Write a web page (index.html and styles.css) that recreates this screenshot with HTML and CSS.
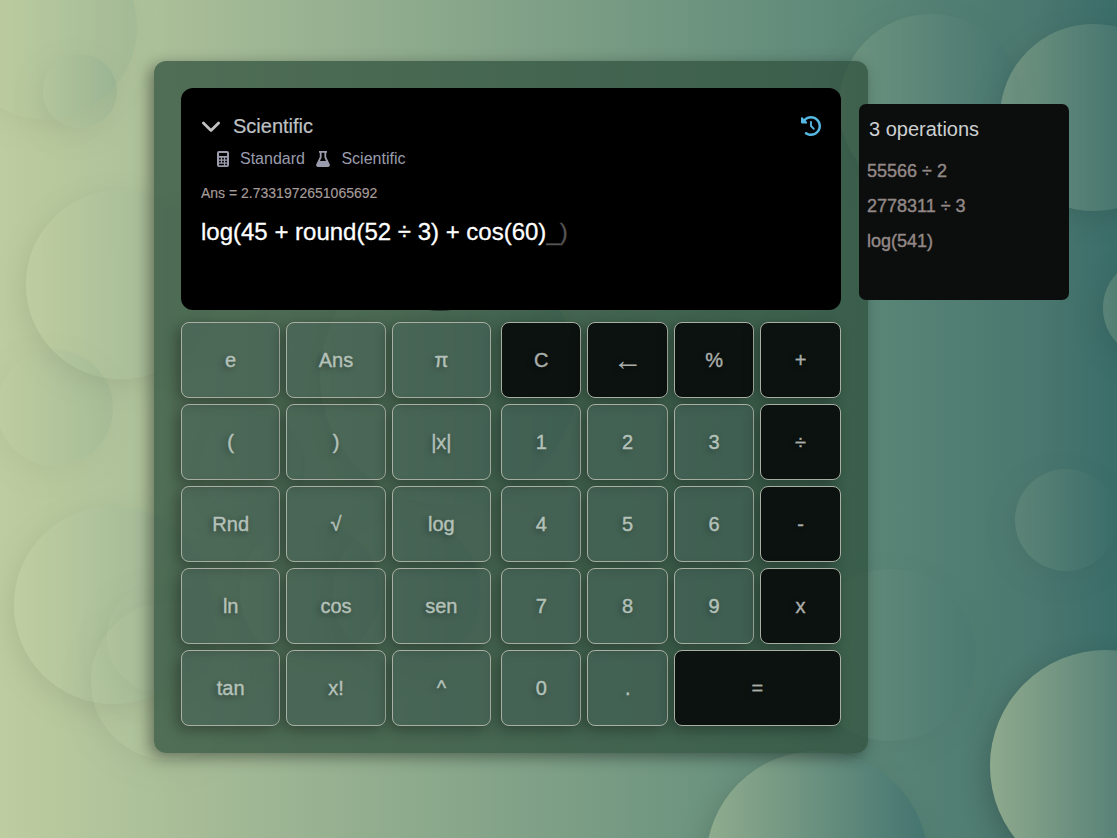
FILE: index.html
```html
<!DOCTYPE html>
<html lang="en">
<head>
<meta charset="utf-8">
<title>Calculator</title>
<link rel="stylesheet" href="styles.css">
</head>
<body>
<div class="bubbles" aria-hidden="true">
  <i class="bubble b1"></i><i class="bubble b2"></i><i class="bubble b3"></i><i class="bubble b4"></i>
  <i class="bubble b5"></i><i class="bubble b6"></i><i class="bubble b7"></i><i class="bubble b8"></i>
  <i class="bubble b9"></i><i class="bubble b10"></i><i class="bubble b11"></i><i class="bubble b12"></i>
  <i class="bubble b13"></i><i class="bubble b14"></i><i class="bubble b15"></i><i class="bubble b16"></i>
  <i class="bubble b17"></i><i class="bubble b18"></i>
</div>
<main class="calculator">
  <section class="display">
    <header class="display-head">
      <svg class="chevron" viewBox="0 0 20 20"><path d="M2.400 7 10 14.500l7.600-7.500" fill="none" stroke="currentColor" stroke-width="2.800" stroke-linecap="round" stroke-linejoin="round"/></svg>
      <span class="mode-name">Scientific</span>
      <svg class="history-icon" viewBox="0 0 512 512"><path fill="currentColor" d="M75 75 41 41C26 26 0 36.700 0 57.900V168c0 13.300 10.700 24 24 24h110.100c21.400 0 32.100-25.900 17-41l-30.800-30.800C155 85.500 203 64 256 64c106 0 192 86 192 192s-86 192-192 192c-40.800 0-78.600-12.700-109.700-34.400-14.500-10.100-34.400-6.600-44.600 7.900s-6.600 34.400 7.900 44.600C151.200 495 201.700 512 256 512c141.400 0 256-114.600 256-256S397.400 0 256 0C185.300 0 121.300 28.700 75 75zm181 53c-13.300 0-24 10.700-24 24v104c0 6.400 2.500 12.500 7 17l72 72c9.400 9.400 24.600 9.400 33.900 0s9.400-24.600 0-33.900l-65-65V152c0-13.300-10.700-24-24-24z"/></svg>
    </header>
    <nav class="modes">
      <svg class="mode-icon" viewBox="0 0 14 16"><path fill="currentColor" fill-rule="evenodd" d="M3 0h8a2 2 0 0 1 2 2v12a2 2 0 0 1-2 2H3a2 2 0 0 1-2-2V2a2 2 0 0 1 2-2zm0 2v3h8V2zM3 6.700v1.800h1.800V6.700zm3.100 0v1.800h1.800V6.700zm3.100 0v1.800H11V6.700zM3 9.800v1.600h1.800V9.800zm3.100 0v1.600h1.800V9.800zm3.100 0v1.600H11V9.800zM3 12.700v1.600h4.900v-1.600zm6.200 0v1.600H11v-1.600z"/></svg>
      <span class="mode">Standard</span>
      <svg class="mode-icon flask" viewBox="0 0 14 16"><path fill="currentColor" fill-rule="evenodd" d="M3 0h8v1.800h-.8V6l3.400 7a2 2 0 0 1-1.800 3H2.200a2 2 0 0 1-1.800-3l3.400-7V1.800H3zm2.600 1.800v4.600L4 10h6L8.400 6.400V1.800z"/></svg>
      <span class="mode">Scientific</span>
    </nav>
    <p class="answer">Ans = 2.7331972651065692</p>
    <p class="expression">log(45 + round(52 ÷ 3) + cos(60)<span class="pending">_)</span></p>
  </section>
  <div class="keypad">
    <div class="keys functions">
      <button class="key">e</button><button class="key">Ans</button><button class="key">π</button>
      <button class="key">(</button><button class="key">)</button><button class="key">|x|</button>
      <button class="key">Rnd</button><button class="key">√</button><button class="key">log</button>
      <button class="key">ln</button><button class="key">cos</button><button class="key">sen</button>
      <button class="key">tan</button><button class="key">x!</button><button class="key">^</button>
    </div>
    <div class="keys numbers">
      <button class="key dark">C</button><button class="key dark arrow">←</button><button class="key dark">%</button><button class="key dark">+</button>
      <button class="key">1</button><button class="key">2</button><button class="key">3</button><button class="key dark">÷</button>
      <button class="key">4</button><button class="key">5</button><button class="key">6</button><button class="key dark">-</button>
      <button class="key">7</button><button class="key">8</button><button class="key">9</button><button class="key dark">x</button>
      <button class="key">0</button><button class="key">.</button><button class="key dark equals">=</button>
    </div>
  </div>
  <aside class="history">
    <h2 class="history-title">3 operations</h2>
    <ul class="history-list">
      <li>55566 ÷ 2</li>
      <li>2778311 ÷ 3</li>
      <li>log(541)</li>
    </ul>
  </aside>
</main>
</body>
</html>
```
FILE: styles.css
```css
* { box-sizing: border-box; margin: 0; padding: 0; }

body {
  position: relative;
  height: 838px;
  padding: 61px 0 0 154px;
  overflow: hidden;
  font-family: "Liberation Sans", Arial, sans-serif;
  background: linear-gradient(90deg, #becda0 0%, #9ab392 27%, #749982 57%, #5a8677 78%, #4a776f 93%, #3b6d69 100%);
}

.bubbles { position: absolute; inset: 0; overflow: hidden; }
.bubble {
  position: absolute;
  width: calc(var(--r) * 2);
  height: calc(var(--r) * 2);
  left: calc(var(--x) - var(--r));
  top: calc(var(--y) - var(--r));
  border-radius: 50%;
  opacity: var(--o);
  background: linear-gradient(90deg, #c5d2a5, #2c626a);
  box-shadow: -5px 8px 24px rgba(0, 0, 0, .3);
}
.b1 { --x: 45px; --y: 27px; --r: 92px; --o: .13; background: linear-gradient(90deg, #c5d2a5, #5f8f80); }
.b2 { --x: 80px; --y: 91px; --r: 37px; --o: .14; background: linear-gradient(90deg, #b4c79c, #57857c); }
.b3 { --x: 120px; --y: 284px; --r: 94.500px; --o: .23; background: linear-gradient(90deg, #ccd8aa, #7c9c88); }
.b4 { --x: 55px; --y: 408px; --r: 58px; --o: .11; background: linear-gradient(90deg, #c5d2a5, #578478); }
.b5 { --x: 113px; --y: 605px; --r: 99px; --o: .23; background: linear-gradient(90deg, #ccd8aa, #6f9688); }
.b6 { --x: 162px; --y: 638px; --r: 55px; --o: .09; background: linear-gradient(90deg, #becda0, #648c80); }
.b7 { --x: 170px; --y: 681px; --r: 79px; --o: .12; background: linear-gradient(90deg, #c5d2a5, #9ab69a); }
.b8 { --x: 449px; --y: 376px; --r: 129px; --o: .25; }
.b9 { --x: 407px; --y: 592px; --r: 74px; --o: .18; }
.b10 { --x: 253px; --y: 465px; --r: 53px; --o: .1; }
.b11 { --x: 310px; --y: 592px; --r: 70px; --o: .15; }
.b12 { --x: 931px; --y: 106px; --r: 92px; --o: .17; }
.b13 { --x: 1093px; --y: 117px; --r: 93.500px; --o: .3; }
.b14 { --x: 1153px; --y: 308px; --r: 50px; --o: .2; }
.b15 { --x: 1066px; --y: 520px; --r: 51px; --o: .12; background: linear-gradient(90deg, #c5d2a5, #356a6a); }
.b16 { --x: 890px; --y: 655px; --r: 86px; --o: .11; }
.b17 { --x: 1106px; --y: 766px; --r: 116px; --o: .54; }
.b18 { --x: 817px; --y: 862px; --r: 111px; --o: .4; }

.calculator {
  position: relative;
  z-index: 0;
  width: 714px;
  height: 692px;
  padding: 27px;
  border-radius: 12px;
  background: rgba(46, 79, 61, .73);
  box-shadow: -4px 4px 15px rgba(0, 0, 0, .4);
}

.display {
  position: relative;
  height: 222px;
  padding: 28px 20px 0;
  border-radius: 12px;
  background: #000;
}
/* Lower edge of the round glow that sits behind the display */
.display::after {
  content: "";
  position: absolute;
  z-index: -1;
  left: 194px;
  bottom: -1px;
  width: 130px;
  height: 130px;
  border-radius: 50%;
  background: rgba(25, 35, 28, .7);
}

.display-head { display: flex; align-items: center; height: 20px; }
.chevron { width: 20px; height: 20px; color: #bfc0c2; }
.mode-name { margin-left: 12px; font-size: 20px; line-height: 20px; color: #bfc1c4; -webkit-text-stroke: .2px currentColor; }
.history-icon { width: 20px; height: 20px; margin-left: auto; color: #55b9e3; }

.modes {
  display: flex;
  align-items: center;
  height: 20px;
  margin-top: 13px;
  padding-left: 15px;
  color: #9a9cad;
}
.mode-icon { width: 14px; height: 16px; margin-right: 10px; }
.flask { margin-right: 11.500px; }
.mode { margin-right: 11px; font-size: 16px; line-height: 20px; }

.answer { margin-top: 16px; font-size: 14px; line-height: 16px; color: #a79c9a; -webkit-text-stroke: .15px currentColor; }
.expression {
  margin-top: 17px;
  font-size: 24px;
  line-height: 28px;
  color: #fff;
  -webkit-text-stroke: .3px currentColor;
}
.pending { color: #565353; }

.keypad { display: grid; grid-template-columns: 310px 339.800px; column-gap: 10px; margin-top: 12px; }
.keys { display: grid; grid-auto-rows: 76px; gap: 6px; }
.functions { grid-template-columns: repeat(3, 1fr); }
.numbers { grid-template-columns: repeat(4, 1fr); }

.key {
  border: 1px solid #a9b0a3;
  border-radius: 8px;
  font: 20px "Liberation Sans", Arial, sans-serif;
  color: #b4c1b9;
  background: rgba(72, 88, 100, .2);
  -webkit-text-stroke: .4px currentColor;
  text-shadow: -2px 2px 6px rgba(0, 0, 0, .4);
  box-shadow: -4px 4px 14px rgba(0, 0, 0, .32);
}
.key.dark { color: #aaaeab; background: #0c120f; }
.key.arrow { font-family: "Liberation Serif", serif; font-size: 30px; line-height: 30px; -webkit-text-stroke: 0; }
.equals { grid-column: span 2; }

/* Floating panel that overlaps the calculator's right edge */
.history {
  position: absolute;
  left: 705px;
  top: 43px;
  width: 210px;
  height: 196px;
  padding: 14px 8px;
  border-radius: 7px;
  background: #0b0e0c;
}
.history-title { padding-left: 2px; font-size: 20px; font-weight: 400; line-height: 22px; color: #cdd0d2; }
.history-list { margin-top: 20px; list-style: none; }
.history-list li {
  height: 35px;
  font-size: 18px;
  line-height: 22px;
  color: #938887;
  -webkit-text-stroke: .4px currentColor;
}
```
